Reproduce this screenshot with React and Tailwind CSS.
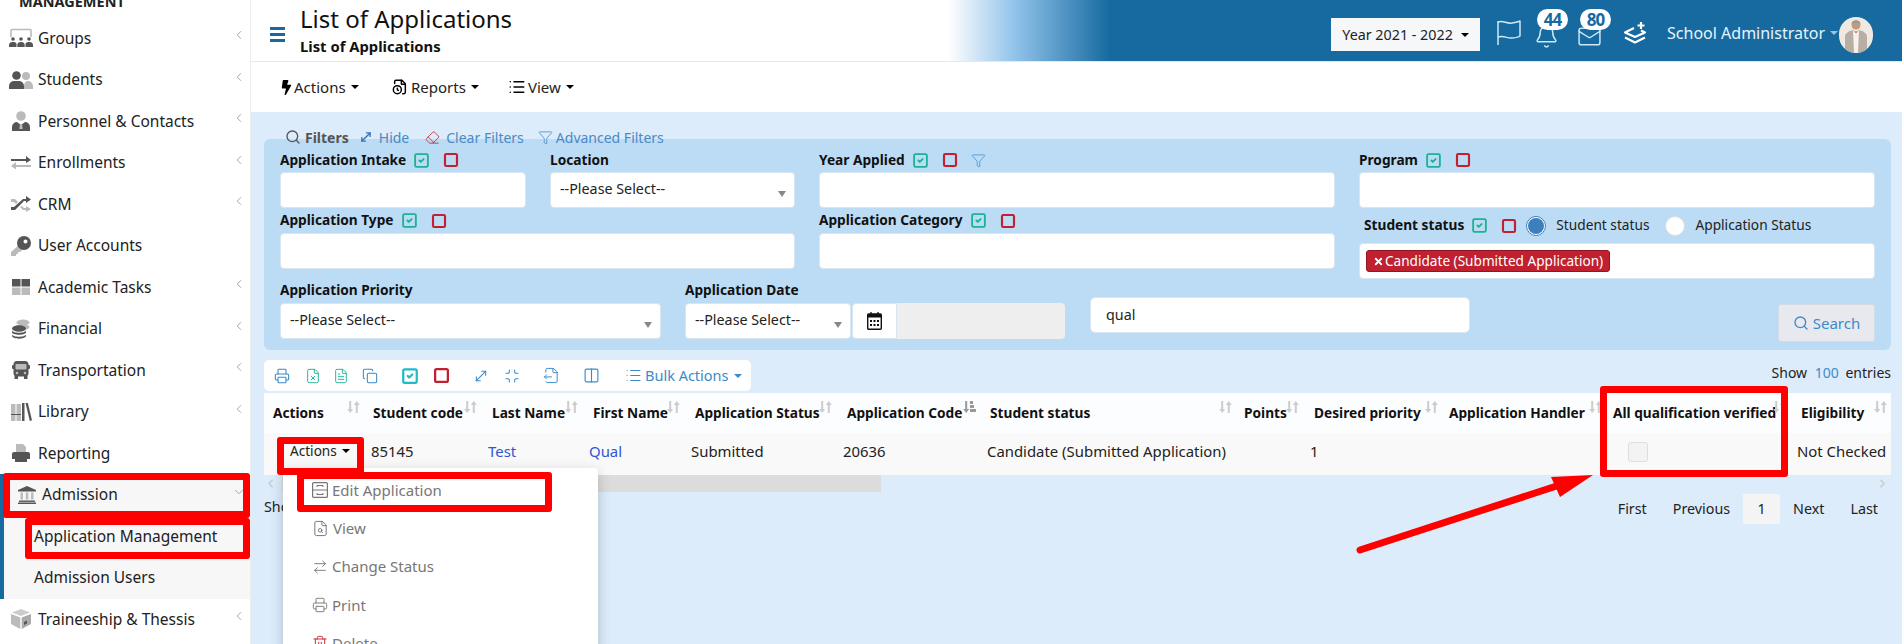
import React from 'react';
import {
  ChevronLeft, ChevronDown, ChevronRight, Printer, FileX, FileText, FileClock, Copy, SquareCheck, Square,
  MoveDiagonal, Minimize, FileOutput, Columns2, List, Search, Eraser, Funnel, Bell, Mail, X,
  ArrowRightLeft, Trash2, FileSearch,
} from 'lucide-react';
import { FaBolt } from 'react-icons/fa';

const dark = '#555';
const light = '#bbb';

// grey two tone icons of the side menu
function GroupsIcon() {
  return (
    <svg width="24" height="20" viewBox="0 0 24 20">
      <path d="M2 9V2.500A1 1 0 0 1 3 1.500h18a1 1 0 0 1 1 1V9" fill="none" stroke={light} strokeWidth="1.600" />
      <g fill={dark}>
        <circle cx="4" cy="11" r="1.800" /><circle cx="12" cy="11" r="1.800" /><circle cx="20" cy="11" r="1.800" />
        <path d="M0 19v-2.500A3 3 0 0 1 3 14h2a3 3 0 0 1 2.500 1.500V19z" />
        <path d="M8.300 19v-2.500a3 3 0 0 1 3-2.500h1.400a3 3 0 0 1 3 2.500V19z" />
        <path d="M16.500 19v-3.500A3 3 0 0 1 19 14h2a3 3 0 0 1 3 2.500V19z" />
      </g>
    </svg>
  );
}
function StudentsIcon() {
  return (
    <svg width="24" height="18" viewBox="0 0 24 18">
      <circle cx="17" cy="5" r="4" fill={light} /><path d="M15 18v-4a5 5 0 0 1 3-4h1a5 5 0 0 1 5 5v3z" fill={light} />
      <circle cx="7.500" cy="4.500" r="4.300" fill={dark} /><path d="M0 18v-3a5 5 0 0 1 5-5h5a5 5 0 0 1 5 5v3z" fill={dark} />
    </svg>
  );
}
function PersonIcon() {
  return (
    <svg width="18" height="20" viewBox="0 0 18 20">
      <circle cx="9" cy="5" r="4.800" fill={light} />
      <path d="M0 20v-4a5 5 0 0 1 5-5l4 3 4-3a5 5 0 0 1 5 5v4z" fill={dark} />
      <path d="M8 13h2l.7 5H7.300z" fill={light} />
    </svg>
  );
}
function SwapIcon() {
  return (
    <svg width="20" height="15" viewBox="0 0 20 15">
      <path d="M0 4h15V1l5 4-5 3V6H0z" fill={dark} />
      <path d="M20 10H5V7l-5 4 5 3.500V12h15z" fill={light} />
    </svg>
  );
}
function ShuffleIcon() {
  return (
    <svg width="20" height="16" viewBox="0 0 20 16">
      <path d="M0 3h4l3 3-2 2-2-2H0zM11 10l2 2h2v-2l5 3-5 3v-2h-3l-3-3z" fill={light} />
      <path d="M0 11h3L12 3h3V0l5 3.500L15 7V5h-2L4 14H0z" fill={dark} />
    </svg>
  );
}
function KeyIcon() {
  return (
    <svg width="20" height="20" viewBox="0 0 20 20">
      <path d="M8.500 8.500 0 16v4h5v-2h2v-2h2l3-3z" fill={light} />
      <path d="M13 0a7 7 0 1 0 0 14 7 7 0 0 0 0-14zm1.500 3.500a2 2 0 1 1 0 4 2 2 0 0 1 0-4z" fill={dark} fillRule="evenodd" />
    </svg>
  );
}
function GridIcon() {
  return (
    <svg width="18" height="16" viewBox="0 0 18 16">
      <rect width="8.500" height="7.500" fill={dark} /><rect x="9.500" width="8.500" height="7.500" fill={dark} />
      <rect y="8.500" width="8.500" height="7.500" fill={light} /><rect x="9.500" y="8.500" width="8.500" height="7.500" fill={light} />
    </svg>
  );
}
function CoinsIcon() {
  return (
    <svg width="18" height="20" viewBox="0 0 18 20">
      <ellipse cx="11" cy="3.500" rx="6.500" ry="3" fill={light} /><ellipse cx="11" cy="8" rx="6.500" ry="3" fill={light} />
      <ellipse cx="7" cy="9.500" rx="7" ry="3.200" fill={dark} /><path d="M0 11.500c1 3 13 3 14 0v2c-1 3-13 3-14 0z" fill={dark} />
      <path d="M0 15.500c1 3 13 3 14 0v1.500c-1 3.500-13 3.500-14 0z" fill={dark} />
    </svg>
  );
}
function BusIcon() {
  return (
    <svg width="18" height="18" viewBox="0 0 18 18">
      <rect x="1.500" y="0" width="15" height="15.500" rx="3.500" fill={dark} />
      <rect x="0" y="4" width="18" height="4" rx="1" fill={dark} />
      <rect x="3.500" y="3" width="11" height="5.500" rx="1" fill={light} />
      <circle cx="5" cy="12" r="1.300" fill={light} /><circle cx="13" cy="12" r="1.300" fill={light} />
      <rect x="2.500" y="15" width="3.500" height="3" fill={dark} /><rect x="12" y="15" width="3.500" height="3" fill={dark} />
    </svg>
  );
}
function BooksIcon() {
  return (
    <svg width="21" height="18" viewBox="0 0 21 18">
      <rect y="1" width="4.500" height="17" fill={light} /><rect x="5.500" y="1" width="4.500" height="17" fill={light} />
      <rect y="11" width="10" height="1" fill={dark} />
      <rect x="11" y="0" width="2.500" height="18" fill={dark} />
      <path d="m14.500 0 2.200-.7L21 17.300l-2.200.7z" fill={dark} />
    </svg>
  );
}
function ReportIcon() {
  return (
    <svg width="18" height="18" viewBox="0 0 18 18">
      <path d="M4 0h7l3 3v5H4z" fill={light} />
      <path d="M2 8h14a2 2 0 0 1 2 2v5H0v-5a2 2 0 0 1 2-2z" fill={dark} />
      <rect x="3" y="15" width="12" height="3" fill={dark} />
    </svg>
  );
}
function BankIcon() {
  return (
    <svg width="18" height="18" viewBox="0 0 18 18">
      <path d="M9 0 0 4v1.500h18V4z" fill={dark} />
      <rect x="2.500" y="6.500" width="2.500" height="7" fill={light} /><rect x="7.800" y="6.500" width="2.500" height="7" fill={light} />
      <rect x="13" y="6.500" width="2.500" height="7" fill={light} />
      <rect x="1" y="14.500" width="16" height="1.400" fill={dark} /><rect y="16.500" width="18" height="1.500" fill={dark} />
    </svg>
  );
}
function BoxIcon() {
  return (
    <svg width="20" height="20" viewBox="0 0 20 20">
      <path d="M10 0 1 3.500 10 7l9-3.500z" fill="#ccc" />
      <path d="M0 5v10l9.300 5V8.500z" fill={light} />
      <path d="M20 5v10l-9.300 5V8.500z" fill="#aaa" />
      <path d="m13 13 3-1.500v3l-3 1.500z" fill={dark} />
    </svg>
  );
}

const menu = [
  { label: 'Groups', icon: <GroupsIcon />, more: true },
  { label: 'Students', icon: <StudentsIcon />, more: true },
  { label: 'Personnel & Contacts', icon: <PersonIcon />, more: true },
  { label: 'Enrollments', icon: <SwapIcon />, more: true },
  { label: 'CRM', icon: <ShuffleIcon />, more: true },
  { label: 'User Accounts', icon: <KeyIcon /> },
  { label: 'Academic Tasks', icon: <GridIcon />, more: true },
  { label: 'Financial', icon: <CoinsIcon />, more: true },
  { label: 'Transportation', icon: <BusIcon />, more: true },
  { label: 'Library', icon: <BooksIcon />, more: true },
  { label: 'Reporting', icon: <ReportIcon /> },
];

function MenuRow({ item }) {
  return (
    <div className="flex h-[41.5px] items-center text-[#222]">
      <span className="flex w-[38px] justify-center pl-[4px]">{item.icon}</span>
      <span className="flex-1">{item.label}</span>
      {item.more && <ChevronLeft size={14} strokeWidth={1.5} className="mr-[4px] mb-[6px] text-[#999]" />}
    </div>
  );
}

function Sidebar() {
  return (
    <aside className="w-[251px] shrink-0 border-r border-[#eee] bg-white text-[15.5px]">
      <div className="flex h-[17.5px] items-end overflow-hidden pb-[9px] pl-[19px]">
        <span className="text-[14.5px] leading-none font-bold text-[#222]">MANAGEMENT</span>
      </div>
      {menu.map((item) => <MenuRow key={item.label} item={item} />)}
      <div className="border-l-[4px] border-[#166a9f] bg-[#f7f7f7]">
        <div className="flex h-[41.5px] items-center text-[#222]">
          <span className="flex w-[38px] justify-center pl-[8px]"><BankIcon /></span>
          <span className="flex-1">Admission</span>
          <ChevronDown size={14} strokeWidth={1.5} className="mr-[4px] mb-[6px] text-[#999]" />
        </div>
        <div className="flex h-[41.5px] items-center pl-[30px] text-[#222]">Application Management</div>
        <div className="flex h-[41.5px] items-center pl-[30px] text-[#222]">Admission Users</div>
      </div>
      <MenuRow item={{ label: 'Traineeship & Thessis', icon: <BoxIcon />, more: true }} />
    </aside>
  );
}

function Caret({ className = 'border-t-black' }) {
  return <span className={`ml-[5px] inline-block h-0 w-0 border-x-[4px] border-t-[4px] border-x-transparent ${className}`} />;
}

function Avatar() {
  return (
    <svg width="34" height="36" viewBox="0 0 34 36" className="rounded-full">
      <rect width="34" height="36" fill="#efe9e2" />
      <circle cx="17" cy="8" r="4.500" fill="#c49a7e" />
      <path d="M12.500 7c0-5 9-5 9 0-2-1.500-7-1.500-9 0z" fill="#999" />
      <path d="M6 36V20c0-4 4-6 8-7l3 3 3-3c4 1 8 3 8 7v16z" fill="#b8aea3" />
      <path d="M14 14h6l-1 22h-4z" fill="#f6f1ec" />
      <path d="M15 14.500h4l-2 1.500z" fill="#a5482f" />
    </svg>
  );
}

function WavingFlag() {
  return (
    <svg width="26" height="26" viewBox="0 0 26 26" fill="none" stroke="#cfe8f7" strokeWidth="1.500" strokeLinejoin="round">
      <path d="M2 2v24" />
      <path d="M2 3c6-2 8 2 14 1 3-.5 6-1 8-2v15c-3 2-6 2-9 2-5 0-8-3-13-1" />
    </svg>
  );
}

function LayersPlus() {
  return (
    <svg width="24" height="22" viewBox="0 0 24 22" fill="none" stroke="white" strokeWidth="2.200" strokeLinejoin="round">
      <path d="M11 6 2 10.500l10 4.500 10-4.500-4-2" />
      <path d="m2 15.500 10 5 10-5" />
      <path d="M18 0v7M14.500 3.500h7" />
    </svg>
  );
}

function Badge({ value }) {
  return (
    <span className="absolute top-[-15px] left-[3px] flex h-[21px] w-[31px] items-center justify-center rounded-full bg-white text-[17px] font-bold tracking-[-1px] text-[#166a9f]">
      {value}
    </span>
  );
}

function Header() {
  return (
    <header className="flex h-[62px] items-center border-b border-[#e8e8e8] bg-[linear-gradient(90deg,#fff_697px,#90c2ea_765px,#166a9f_859px)]">
      <div className="flex w-[49px] flex-col items-center gap-[3px] pt-[7px] pl-[3px]">
        <span className="h-[3px] w-[15px] bg-[#166a9f]" />
        <span className="h-[3px] w-[15px] bg-[#166a9f]" />
        <span className="h-[3px] w-[15px] bg-[#166a9f]" />
      </div>
      <div className="mb-[4px] flex flex-col">
        <span className="text-[24px] leading-[34px] text-[#111]">List of Applications</span>
        <span className="text-[14.8px] leading-[20px] font-bold text-[#111]">List of Applications</span>
      </div>
      <div className="ml-auto flex items-center pr-[29px]">
        <div className="mt-[8px] flex h-[33px] w-[149px] items-center justify-center bg-[#f6f7f9] text-[14.3px] text-[#222]">
          Year 2021 - 2022 <Caret className="ml-[8px] border-t-black" />
        </div>
        <span className="mt-[2px] ml-[16px] flex"><WavingFlag /></span>
        <span className="relative mt-[12px] ml-[12px] flex"><Bell size={25} strokeWidth={1.4} color="#cfe8f7" /><Badge value="44" /></span>
        <span className="relative mt-[12px] ml-[18px] flex"><Mail size={25} strokeWidth={1.4} color="#cfe8f7" /><Badge value="80" /></span>
        <span className="mt-[4px] ml-[21px] flex"><LayersPlus /></span>
        <span className="mt-[4px] ml-[20px] text-[16px] text-[#e8f3fa]">School Administrator</span>
        <Caret className="mt-[4px] border-t-[#9fc3da]" />
        <span className="mt-[8px] ml-[1px] flex"><Avatar /></span>
      </div>
    </header>
  );
}

function MenuBar() {
  return (
    <div className="flex h-[50px] items-center bg-white pl-[28px] text-[15px] text-[#222]">
      <span className="flex w-[113px] items-center"><FaBolt size={15} className="text-black" />Actions<Caret /></span>
      <span className="flex w-[116px] items-center"><FileClock size={16} strokeWidth={2.2} className="mr-[3px] text-black" />Reports<Caret /></span>
      <span className="flex items-center"><List size={18} className="mr-[2px] text-black" />View<Caret /></span>
    </div>
  );
}

function CheckAll() {
  return <SquareCheck size={17} strokeWidth={2.6} className="ml-[7px] text-[#1cb394]" />;
}
function ClearAll() {
  return <Square size={16} strokeWidth={3.2} className="ml-[13px] text-[#c0202f]" />;
}

function Label({ children, tools = true, extra, className = '' }) {
  return (
    <div className={`flex h-full items-center text-[13.7px] font-bold text-[#111] ${className}`}>
      {children}
      {tools && <CheckAll />}
      {tools && <ClearAll />}
      {extra}
    </div>
  );
}

function TextBox({ className = '' }) {
  return <div className={`h-[36px] rounded-[4px] border border-[#d8e6f3] bg-white ${className}`} />;
}

function SelectBox({ className = '' }) {
  return (
    <div className={`flex h-[36px] items-center justify-between rounded-[4px] border border-[#d8e6f3] bg-white pr-[8px] pl-[9px] text-[14.3px] text-[#222] ${className}`}>
      <span className="mb-[2px]">--Please Select--</span>
      <span className="mt-[8px] h-0 w-0 border-x-[4px] border-t-[6px] border-x-transparent border-t-[#888]" />
    </div>
  );
}

function Radio({ on }) {
  return (
    <span className={`flex h-[20px] w-[20px] items-center justify-center rounded-full border bg-white ${on ? 'border-[#3d7fbd]' : 'border-[#ddd]'}`}>
      {on && <span className="h-[16px] w-[16px] rounded-full bg-[#3d7fbd]" />}
    </span>
  );
}

function Filters() {
  return (
    <>
      <div className="relative z-10 mt-[15px] -mb-[8px] flex h-[20px] items-center pl-[21px] text-[14px] text-[#4a8ac4]">
        <Search size={16} className="text-[#555]" />
        <span className="ml-[4px] font-bold text-[#555]">Filters</span>
        <MoveDiagonal size={14} strokeWidth={2.4} className="ml-[10px] text-[#3476b5]" />
        <span className="ml-[6px]">Hide</span>
        <Eraser size={15} strokeWidth={1.3} className="ml-[16px] text-[#c0202f]" />
        <span className="ml-[6px]">Clear Filters</span>
        <Funnel size={15} strokeWidth={1.3} className="ml-[14px]" />
        <span className="ml-[3px]">Advanced Filters</span>
      </div>
      <div className="rounded-[6px] bg-[#bcdbf5] px-[16px] pt-[11px] pb-[8px]">
        <div className="flex justify-between">
          <div className="w-[1055px]">
            <div className="flex gap-[24px]">
              <div className="w-[246px]"><div className="h-[22px]"><Label className="pb-[2px]">Application Intake</Label></div><TextBox /></div>
              <div className="w-[245px]"><div className="h-[22px]"><Label className="pb-[2px]" tools={false}>Location</Label></div><SelectBox /></div>
              <div className="w-[516px]">
                <div className="h-[22px]">
                  <Label className="pb-[2px]" extra={<Funnel size={15} strokeWidth={1.3} className="ml-[13px] text-[#4a90d0]" />}>Year Applied</Label>
                </div>
                <TextBox />
              </div>
            </div>
            <div className="flex gap-[24px]">
              <div className="w-[515px]"><div className="h-[25px]"><Label>Application Type</Label></div><TextBox /></div>
              <div className="w-[516px]"><div className="h-[25px]"><Label>Application Category</Label></div><TextBox /></div>
            </div>
          </div>
          <div className="w-[516px]">
            <div className="h-[22px]"><Label className="pb-[2px]">Program</Label></div>
            <TextBox />
            <div className="flex h-[35px] items-center pl-[5px] text-[13.7px] text-[#222]">
              <Label>Student status</Label>
              <span className="ml-[9px]"><Radio on /></span>
              <span className="ml-[10px]">Student status</span>
              <span className="ml-[16px]"><Radio /></span>
              <span className="ml-[10px]">Application Status</span>
            </div>
            <div className="flex h-[36px] items-center rounded-[4px] border border-[#d8e6f3] bg-white pl-[6px]">
              <span className="flex h-[22px] items-center rounded-[3px] border border-[#8e1620] bg-[#c0202f] pr-[6px] pl-[6px] text-[13.6px] text-white">
                <X size={11} strokeWidth={4} className="mr-[1px]" />Candidate (Submitted Application)
              </span>
            </div>
          </div>
        </div>
        <div className="mt-[2px] flex items-start">
          <div className="w-[381px]"><div className="h-[22px]"><Label className="pb-[3px]" tools={false}>Application Priority</Label></div><SelectBox /></div>
          <div className="ml-[24px]">
            <div className="h-[22px]"><Label className="pb-[3px]" tools={false}>Application Date</Label></div>
            <div className="flex">
              <SelectBox className="w-[166px]" />
              <div className="ml-[1px] flex h-[36px] w-[45px] items-center justify-center rounded-l-[4px] border border-[#d8e6f3] bg-white"><CalendarGlyph /></div>
              <div className="h-[36px] w-[168px] rounded-r-[4px] bg-[#eee]" />
            </div>
          </div>
          <div className="mt-[16px] ml-[25px] flex h-[36px] w-[380px] items-center rounded-[5px] border border-[#d8e6f3] bg-white pl-[15px] text-[14.3px] text-[#222]">qual</div>
          <button className="mt-[23px] ml-auto flex h-[38px] w-[97px] items-center justify-center gap-[4px] rounded-[3px] border border-[#d5dbe3] bg-[#e8e9ee] text-[15px] text-[#3a8bc8]">
            <Search size={16} />Search
          </button>
        </div>
      </div>
    </>
  );
}

function CalendarGlyph() {
  return (
    <svg width="15" height="18" viewBox="0 0 15 18">
      <path d="M4 0v3M11 0v3" stroke="#111" strokeWidth="1.300" />
      <rect x=".7" y="2" width="13.600" height="15.300" rx="1" fill="none" stroke="#111" strokeWidth="1.400" />
      <rect x=".7" y="2" width="13.600" height="3.500" fill="#111" />
      <g fill="#111">
        <rect x="3" y="8" width="2" height="2" /><rect x="6.500" y="8" width="2" height="2" /><rect x="10" y="8" width="2" height="2" />
        <rect x="3" y="12" width="2" height="2" /><rect x="6.500" y="12" width="2" height="2" /><rect x="10" y="12" width="2" height="2" />
      </g>
    </svg>
  );
}

function Toolbar() {
  const blue = 'text-[#3a8bc8]';
  return (
    <div className="mt-[10px] flex items-start justify-between">
      <div className="flex h-[31px] w-[487px] items-center rounded-[5px] bg-white pl-[10px] text-[14.5px]">
        <Printer size={16} strokeWidth={1.6} className={blue} />
        <FileX size={16} strokeWidth={1.4} className="ml-[15px] text-[#1cb394]" />
        <FileText size={16} strokeWidth={1.4} className="ml-[12px] text-[#1cb394]" />
        <Copy size={16} strokeWidth={1.6} className={`ml-[13px] ${blue}`} />
        <SquareCheck size={18} strokeWidth={3} className="ml-[23px] text-[#1fbcc4]" />
        <Square size={17} strokeWidth={3.2} className="ml-[14px] text-[#c0202f]" />
        <MoveDiagonal size={16} strokeWidth={1.6} className={`ml-[23px] ${blue}`} />
        <Minimize size={16} strokeWidth={1.6} className={`ml-[15px] ${blue}`} />
        <FileOutput size={17} strokeWidth={1.4} className={`ml-[23px] ${blue}`} />
        <Columns2 size={17} strokeWidth={1.6} className={`ml-[23px] ${blue}`} />
        <List size={17} strokeWidth={1.6} className={`ml-[25px] ${blue}`} />
        <span className={`ml-[3px] ${blue}`}>Bulk Actions</span>
        <Caret className="border-t-[#3a8bc8]" />
      </div>
      <div className="mt-[2px] text-[14px] text-[#222]">Show <span className="mr-[3px] ml-[4px] text-[#3a8bc8]">100</span> entries</div>
    </div>
  );
}

function SortMark({ active }) {
  return (
    <svg width="13" height="12" viewBox="0 0 13 12" className="absolute top-[8px] right-[4px]" fill={active ? '#999' : '#ccc'}>
      <path d="M2.200 0h2v8h2L3.200 12 .2 8h2z" />
      {active
        ? <path d="M7 0h3v3H7zM7 4h4v3H7zM7 8h6v3H7z" />
        : <path d="M8.800 12h2V4h2L9.800 0l-3 4h2z" />}
    </svg>
  );
}

const columns = [
  { name: 'Actions', pad: 'pl-[9px]' },
  { name: 'Student code', pad: 'pl-[9px]' },
  { name: 'Last Name', pad: 'pl-[11px]' },
  { name: 'First Name', pad: 'pl-[11px]' },
  { name: 'Application Status', pad: 'pl-[11px]' },
  { name: 'Application Code', pad: 'pl-[11px]', active: true },
  { name: 'Student status', pad: 'pl-[10px]' },
  { name: 'Points', pad: 'pl-[8px]' },
  { name: 'Desired priority', pad: 'pl-[11px]' },
  { name: 'Application Handler', pad: 'pl-[7px]' },
  { name: 'All qualification verified', pad: 'pl-[7px]' },
  { name: 'Eligibility', pad: 'pl-[11px]' },
];

const gridCols = 'grid grid-cols-[100px_117px_101px_102px_152px_144px_256px_67px_139px_164px_184px_101px]';

function Table() {
  return (
    <div className="mt-[2px]">
      <div className={`${gridCols} h-[40px] items-center bg-[#fcfdff] text-[13.7px] font-bold whitespace-nowrap text-[#111]`}>
        {columns.map((col) => (
          <div key={col.name} className={`relative flex h-full items-center ${col.pad}`}>
            {col.name}
            <SortMark active={col.active} />
          </div>
        ))}
      </div>
      <div className={`${gridCols} h-[42px] items-center bg-[#f9f9f9] pb-[5px] text-[14.9px] whitespace-nowrap text-[#222]`}>
        <div className="flex items-center pl-[26px] text-[13.6px]">Actions<Caret /></div>
        <div className="pl-[7px]">85145</div>
        <div className="pl-[7px] text-[#2f55d4]">Test</div>
        <div className="pl-[7px] text-[#2f55d4]">Qual</div>
        <div className="pl-[7px]">Submitted</div>
        <div className="pl-[7px]">20636</div>
        <div className="pl-[7px]">Candidate (Submitted Application)</div>
        <div />
        <div className="pl-[7px]">1</div>
        <div />
        <div className="pl-[22px]"><span className="block h-[20px] w-[20px] rounded-[3px] border border-[#ddd] bg-[#f3f3f3]" /></div>
        <div className="pl-[7px]">Not Checked</div>
      </div>
      <div className="flex h-[17px] items-center justify-between text-[#ccc]">
        <div className="flex flex-1 items-center">
          <ChevronLeft size={13} strokeWidth={3} className="mr-[5px]" />
          <div className="h-[17px] w-[599px] bg-[#dcdcdc]" />
        </div>
        <ChevronRight size={13} strokeWidth={3} className="mr-[2px]" />
      </div>
      <div className="mt-[2px] flex items-start justify-between text-[14.3px] text-[#222]">
        <span className="mt-[2px]">Showing 1 to 1 of 1 entries</span>
        <div className="flex h-[30px] items-center">
          <span className="px-[13px]">First</span>
          <span className="px-[13px]">Previous</span>
          <span className="flex h-[30px] w-[37px] items-center justify-center bg-[#f4f4f4]">1</span>
          <span className="px-[13px]">Next</span>
          <span className="px-[13px]">Last</span>
        </div>
      </div>
    </div>
  );
}

function EditGlyph() {
  return (
    <svg width="16" height="16" viewBox="0 0 16 16" fill="none" stroke="#777" strokeWidth="1.200">
      <rect x=".6" y=".6" width="14.800" height="14.800" rx="1" />
      <path d="M.6 8h14.800M5 3.500h6M5 3.500v1.500M11 3.500v1.500M5 12.500h6M5 11v1.500M11 11v1.500" />
    </svg>
  );
}

function ActionsMenu() {
  const items = [
    { label: 'Edit Application', icon: <EditGlyph /> },
    { label: 'View', icon: <FileSearch size={17} strokeWidth={1.4} /> },
    { label: 'Change Status', icon: <ArrowRightLeft size={16} strokeWidth={1.4} /> },
    { label: 'Print', icon: <Printer size={16} strokeWidth={1.4} /> },
    { label: 'Delete', icon: <Trash2 size={16} strokeWidth={1.4} className="text-[#c0202f]" /> },
  ];
  return (
    <div className="absolute top-[468px] left-[283px] z-20 h-[190px] w-[315px] rounded-[4px] bg-white pt-[3px] pl-[29px] text-[15px] text-[#777] shadow-[0_4px_14px_rgba(0,0,0,0.2)]">
      {items.map((it) => (
        <div key={it.label} className="flex h-[38.3px] items-center gap-[4px]">
          {it.icon}{it.label}
        </div>
      ))}
    </div>
  );
}

// red marks drawn by hand on top of the screenshot
function Marks() {
  const box = 'absolute z-30 rounded-[3px] border-[7px] border-[#ff0000]';
  return (
    <>
      <div className={`${box} top-[473px] left-[3px] h-[45px] w-[247px]`} />
      <div className={`${box} top-[518px] left-[25px] h-[41px] w-[225px]`} />
      <div className={`${box} top-[437px] left-[277px] h-[38px] w-[87px]`} />
      <div className={`${box} top-[472px] left-[297px] h-[40px] w-[255px]`} />
      <div className={`${box} top-[386px] left-[1600px] h-[91px] w-[188px]`} />
      <svg width="260" height="90" viewBox="0 0 260 90" className="absolute top-[470px] left-[1350px] z-30">
        <path d="m10 80 215-70" stroke="#ff0000" strokeWidth="7" strokeLinecap="round" />
        <path d="M243 5 201 7l9 20z" fill="#ff0000" />
      </svg>
    </>
  );
}

export default function App() {
  return (
    <div className="relative flex h-[644px] overflow-hidden bg-white font-['Noto_Sans',sans-serif]">
      <Sidebar />
      <main className="flex min-w-0 flex-1 flex-col">
        <Header />
        <MenuBar />
        <div className="flex-1 bg-[#dcecfb] pr-[11px] pl-[13px]">
          <Filters />
          <Toolbar />
          <Table />
        </div>
      </main>
      <ActionsMenu />
      <Marks />
    </div>
  );
}
